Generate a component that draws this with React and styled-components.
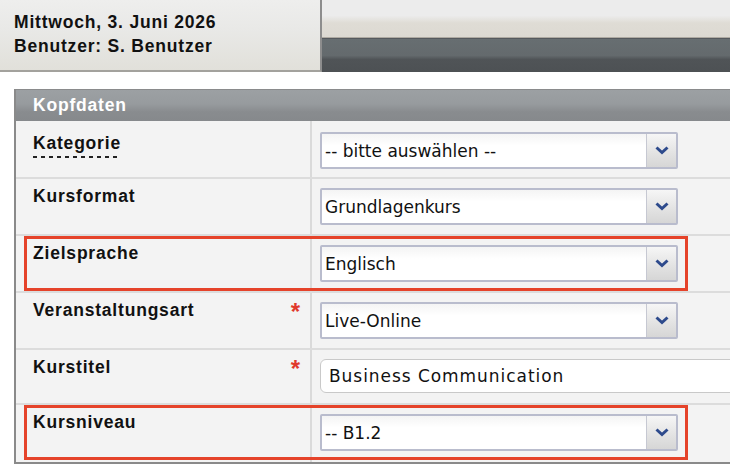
import styled, { createGlobalStyle } from "styled-components";

const GlobalStyle = createGlobalStyle`
  html, body {
    margin: 0;
    padding: 0;
    background: #ffffff;
    overflow: hidden;
  }
  body {
    font-family: "Liberation Sans", Arial, sans-serif;
    color: #111;
  }
`;

const Page = styled.div`
  width: 730px;
  height: 464px;
  overflow: hidden;
`;

const TopBar = styled.div`
  display: flex;
  height: 72px;
`;

const InfoPanel = styled.div`
  box-sizing: border-box;
  width: 322px;
  height: 72px;
  padding: 10px 0 0 14px;
  background: linear-gradient(#eeeeed 0%, #e9e9e7 40%, #e1e0da 100%);
  border-right: 2px solid #8d8d8d;
  border-bottom: 2px solid #a3a29d;
  font-weight: bold;
  font-size: 17.5px;
  letter-spacing: 0.8px;
  line-height: 24px;
`;

const NavArea = styled.div`
  flex: 1;
  display: flex;
  flex-direction: column;
`;

const NavLight = styled.div`
  height: 37px;
  background: linear-gradient(#ececec 0%, #ececec 42%, #dfdcd5 62%, #dcd9d2 100%);
  border-bottom: 1px solid #aeaaa2;
`;

const NavDark = styled.div`
  flex: 1;
  border-top: 1px solid #55595d;
  background: linear-gradient(#676e71 0%, #646a6d 50%, #505457 62%, #4d5154 100%);
`;

const Panel = styled.div`
  margin: 17px 0 0 14px;
  width: 760px;
  border-left: 2px solid #8a8a8a;
  border-bottom: 2px solid #8a8a8a;
  background: #f3f3f3;
`;

const PanelHead = styled.div`
  box-sizing: border-box;
  height: 32px;
  padding: 4px 0 0 17px;
  border-top: 1px solid #8a8b8c;
  background: linear-gradient(#9ca0a3 0%, #979b9e 45%, #898c8f 70%, #86898c 100%);
  color: #fff;
  font-weight: bold;
  font-size: 17.5px;
  letter-spacing: 0.8px;
  line-height: 22px;
`;

const Row = styled.div`
  position: relative;
  box-sizing: border-box;
  display: grid;
  grid-template-columns: 296px 1fr;
  height: ${(p) => p.$h || 57}px;
  border-bottom: 2px solid #dcdcdc;
  &:last-child {
    border-bottom: none;
  }
`;

const LabelCell = styled.div`
  display: flex;
  justify-content: space-between;
  padding: ${(p) => p.$top || 6}px 9px 0 17px;
  border-right: 2px solid #dadada;
  font-weight: bold;
  font-size: 17.5px;
  letter-spacing: 0.8px;
  line-height: 22px;
`;

const Abbr = styled.span`
  align-self: flex-start;
  padding-bottom: 4px;
  background-image: linear-gradient(to right, #222 55%, transparent 55%);
  background-size: 8px 2px;
  background-repeat: repeat-x;
  background-position: 0 100%;
`;

const Required = styled.span`
  color: #e0392b;
  font-size: 24px;
  line-height: 22px;
  margin-top: 2px;
`;

const ValueCell = styled.div`
  padding: ${(p) => p.$top || 9}px 0 0 8px;
`;

const SelectBox = styled.div`
  box-sizing: border-box;
  display: flex;
  width: 358px;
  height: 37px;
  border: 2px solid #b9bccd;
  border-radius: 2px;
  background: #fff;
  font-family: "DejaVu Sans", Verdana, sans-serif;
  font-size: 17px;
  color: #111;
`;

const SelectText = styled.div`
  flex: 1;
  display: flex;
  align-items: center;
  padding-left: 3px;
  background: linear-gradient(#f4f4f4 0%, #ffffff 35%);
`;

const ArrowButton = styled.div`
  width: 29px;
  display: flex;
  align-items: center;
  justify-content: center;
  border-left: 1px solid #c6c8d2;
  background: linear-gradient(#f6f6f6 0%, #e2e2e2 60%, #d6d6d6 100%);
`;

const TextInput = styled.div`
  box-sizing: border-box;
  width: 440px;
  height: 34px;
  display: flex;
  align-items: center;
  padding-left: 8px;
  border: 1px solid #c9c9c9;
  border-radius: 6px;
  background: #fff;
  font-family: "DejaVu Sans", Verdana, sans-serif;
  font-size: 17px;
  letter-spacing: 0.95px;
  color: #111;
`;

const Highlight = styled.div`
  position: absolute;
  left: 8px;
  top: ${(p) => p.$top || 0}px;
  width: 664px;
  height: ${(p) => p.$h || 54}px;
  box-sizing: border-box;
  border: 3px solid #e5432a;
  pointer-events: none;
`;

function Chevron() {
  return (
    <svg width="14" height="9" viewBox="0 0 14 9">
      <path d="M1.5 1.5 L7 6.5 L12.5 1.5" fill="none" stroke="#2d4a8c" strokeWidth="3" />
    </svg>
  );
}

function Select({ value }) {
  return (
    <SelectBox>
      <SelectText>{value}</SelectText>
      <ArrowButton>
        <Chevron />
      </ArrowButton>
    </SelectBox>
  );
}

export default function App() {
  return (
    <Page>
      <GlobalStyle />
      <TopBar>
        <InfoPanel>
          <div>Mittwoch, 3. Juni 2026</div>
          <div>Benutzer: S. Benutzer</div>
        </InfoPanel>
        <NavArea>
          <NavLight />
          <NavDark />
        </NavArea>
      </TopBar>

      <Panel>
        <PanelHead>Kopfdaten</PanelHead>

        <Row $h={58}>
          <LabelCell $top={11}>
            <Abbr>Kategorie</Abbr>
          </LabelCell>
          <ValueCell $top={11}>
            <Select value="-- bitte auswählen --" />
          </ValueCell>
        </Row>

        <Row>
          <LabelCell>
            <span>Kursformat</span>
          </LabelCell>
          <ValueCell>
            <Select value="Grundlagenkurs" />
          </ValueCell>
        </Row>

        <Row>
          <LabelCell>
            <span>Zielsprache</span>
          </LabelCell>
          <ValueCell>
            <Select value="Englisch" />
          </ValueCell>
          <Highlight $top={0} $h={55} />
        </Row>

        <Row>
          <LabelCell>
            <span>Veranstaltungsart</span>
            <Required>*</Required>
          </LabelCell>
          <ValueCell>
            <Select value="Live-Online" />
          </ValueCell>
        </Row>

        <Row $h={55}>
          <LabelCell>
            <span>Kurstitel</span>
            <Required>*</Required>
          </LabelCell>
          <ValueCell $top={9}>
            <TextInput>Business Communication</TextInput>
          </ValueCell>
        </Row>

        <Row $h={57}>
          <LabelCell>
            <span>Kursniveau</span>
          </LabelCell>
          <ValueCell>
            <Select value="-- B1.2" />
          </ValueCell>
          <Highlight $top={0} $h={55} />
        </Row>
      </Panel>
    </Page>
  );
}
